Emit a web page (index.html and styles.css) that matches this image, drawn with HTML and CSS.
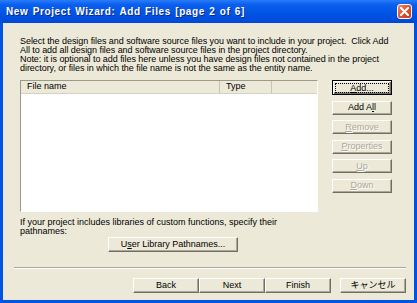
FILE: index.html
```html
<!DOCTYPE html>
<html lang="en">
<head>
    <meta charset="UTF-8">
    <title>New Project Wizard: Add Files [page 2 of 6]</title>
    <link rel="stylesheet" href="styles.css">
</head>
<body>
    <div class="window">
        <div class="titlebar">
            <span class="title">New Project Wizard: Add Files [page 2 of 6]</span>
            <div class="close">
                <svg width="9" height="9" viewBox="0 0 9 9">
                    <path d="M1 1 L8 8 M8 1 L1 8" stroke="#fff" stroke-width="2" stroke-linecap="square"/>
                </svg>
            </div>
        </div>
        <div class="content">
            <p class="intro">
                Select the design files and software source files you want to include in your project.&nbsp; Click Add<br>
                All to add all design files and software source files in the project directory.<br>
                Note: it is optional to add files here unless you have design files not contained in the project<br>
                directory, or files in which the file name is not the same as the entity name.
            </p>
            <div class="files-row">
                <div class="listview">
                    <div class="list-header">
                        <div class="col col-name">File name</div>
                        <div class="col col-type">Type</div>
                        <div class="col col-rest"></div>
                    </div>
                    <div class="list-body"></div>
                </div>
                <div class="side-buttons">
                    <button class="btn default"><span class="focus"><u>A</u>dd...</span></button>
                    <button class="btn">Add A<u>l</u>l</button>
                    <button class="btn" disabled><u>R</u>emove</button>
                    <button class="btn" disabled><u>P</u>roperties</button>
                    <button class="btn" disabled><u>U</u>p</button>
                    <button class="btn" disabled><u>D</u>own</button>
                </div>
            </div>
            <p class="lib-text">
                If your project includes libraries of custom functions, specify their<br>
                pathnames:
            </p>
            <button class="btn lib-btn">U<u>s</u>er Library Pathnames...</button>
            <div class="separator"></div>
            <div class="footer">
                <button class="btn nav">Back</button>
                <button class="btn nav">Next</button>
                <button class="btn nav">Finish</button>
                <button class="btn nav cancel">キャンセル</button>
            </div>
        </div>
    </div>
</body>
</html>
```

FILE: styles.css
```css
html, body {
    margin: 0;
    padding: 0;
}
body {
    width: 417px;
    height: 303px;
    overflow: hidden;
    font-family: "Liberation Sans", "Noto Sans CJK JP", sans-serif;
    font-size: 9px;
    color: #000;
    background-color: #0054e3;
}
.window {
    width: 417px;
    height: 303px;
    box-sizing: border-box;
    background-color: #0054e3; /* blue frame */
    padding: 0 3px 3px 3px;
    display: flex;
    flex-direction: column;
}
.titlebar {
    height: 23px;
    margin: 0 -3px;
    padding: 0 5px 0 6px;
    display: flex;
    align-items: center;
    justify-content: space-between;
    background: linear-gradient(#2a7cf8 0%, #0a5fef 20%, #0054e3 60%, #0048d8 100%);
}
.title {
    color: #fff;
    font-weight: bold;
    font-size: 10px;
    letter-spacing: 0.6px;
    word-spacing: 1px;
    text-shadow: 1px 1px #0a2a8a;
}
.close {
    width: 15px;
    height: 15px;
    box-sizing: border-box;
    border: 1px solid #fff;
    border-radius: 3px;
    background: linear-gradient(135deg, #f08a6a, #e0522e 50%, #c73a18);
    display: flex;
    align-items: center;
    justify-content: center;
}
.content {
    flex: 1;
    background-color: #ece9d8;
    padding: 14px 0 0 17px;
}
.intro {
    margin: 0;
    line-height: 9px;
    letter-spacing: -0.05px;
    white-space: nowrap;
}
.files-row {
    display: flex;
    margin-top: 7px;
}
.listview {
    width: 298px;
    height: 132px;
    box-sizing: border-box;
    border: 1px solid;
    border-color: #9d9a8a #fff #fff #9d9a8a;
    background-color: #fff;
    display: flex;
    flex-direction: column;
}
.list-header {
    display: flex;
    height: 12px;
    background-color: #ece9d8;
    border-bottom: 1px solid #d6d2c2;
}
.col {
    box-sizing: border-box;
    padding-left: 6px;
    line-height: 11px;
    border-right: 1px solid #c7c5b2;
}
.col-name {
    width: 199px;
}
.col-type {
    width: 52px;
}
.col-rest {
    flex: 1;
    border-right: none;
}
.side-buttons {
    margin-left: 14px;
    width: 60px;
    display: flex;
    flex-direction: column;
    gap: 5.5px;
}
.btn {
    font-family: "Liberation Sans", "Noto Sans CJK JP", sans-serif;
    font-size: 9px;
    height: 14px;
    padding: 0;
    box-sizing: border-box;
    background-color: #ece9d8;
    color: #000;
    border: 1px solid;
    border-color: #fff #716f64 #716f64 #fff;
    box-shadow: inset -1px -1px #aca899;
    line-height: 11px;
    cursor: pointer;
}
.btn:disabled {
    color: #aca899;
    text-shadow: 1px 1px #fff;
    cursor: default;
}
.btn.default {
    height: 15px;
    border: 1px solid #000;
    box-shadow: inset 1px 1px #fff, inset -1px -1px #716f64, inset -2px -2px #aca899;
    padding: 2px;
}
.focus {
    display: block;
    line-height: 8px;
    border: 1px dotted #000;
}
.lib-text {
    margin: 6px 0 0;
    line-height: 9px;
}
.lib-btn {
    display: block;
    width: 130px;
    height: 15px;
    margin: 1px 0 0 88px;
}
.separator {
    margin: 15px 0 0 -6px;
    width: 392px;
    height: 0;
    border-top: 1px solid #aca899;
    border-bottom: 1px solid #fff;
}
.footer {
    display: flex;
    margin-top: 9px;
    padding-left: 113px;
}
.nav {
    width: 66px;
    height: 15px;
}
.cancel {
    margin-left: 9px;
}
```
